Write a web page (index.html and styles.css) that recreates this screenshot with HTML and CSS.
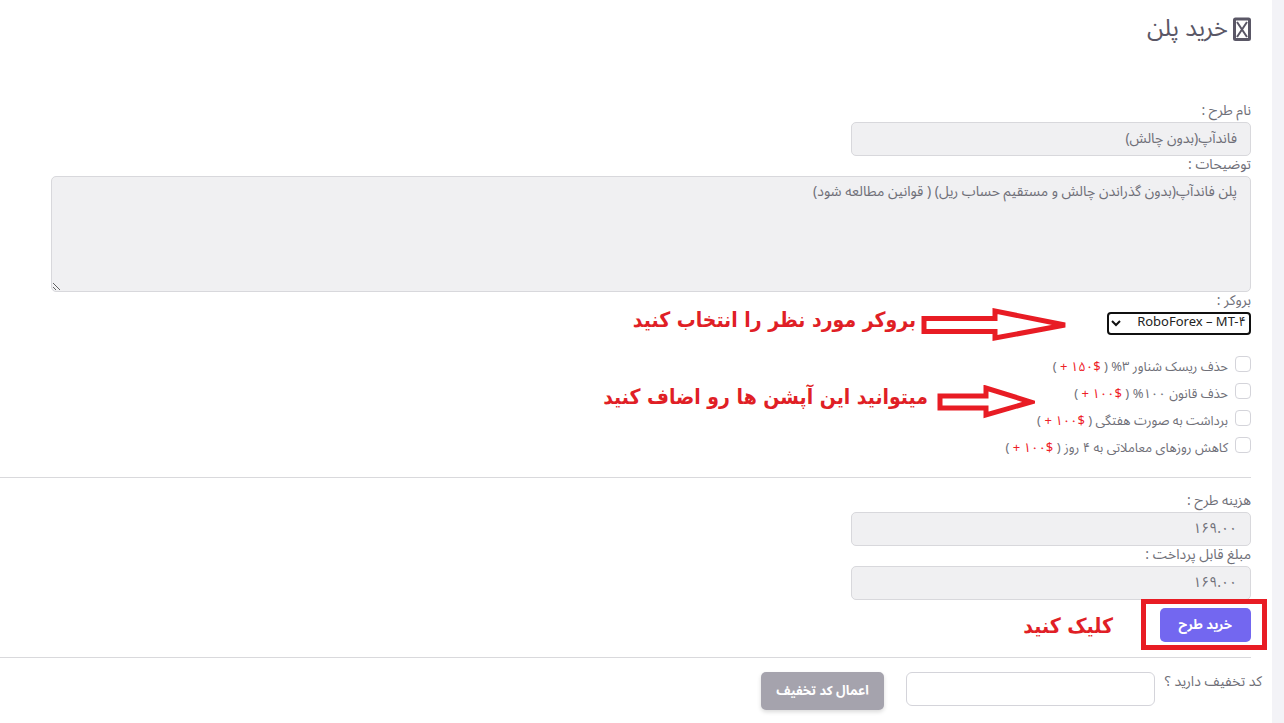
FILE: index.html
```html
<!DOCTYPE html>
<html lang="fa" dir="rtl">
<head>
    <meta charset="UTF-8">
    <meta name="viewport" content="width=device-width, initial-scale=1.0">
    <title>خرید پلن</title>
    <link rel="stylesheet" href="styles.css">
</head>
<body>

    <main class="panel">
        <h1 class="title">
            <svg class="title-icon" viewBox="0 0 18 24" aria-hidden="true">
                <rect x="1.5" y="2" width="15" height="20.500" rx="1"/>
                <path class="cross" d="M4 5 L14 20 M14 5 L4 20"/>
            </svg>
            <span>خرید پلن</span>
        </h1>

        <form class="plan-form">
            <label for="planName">نام طرح :</label>
            <input type="text" id="planName" class="input-field" value="فاندآپ(بدون چالش)" readonly>

            <label for="planInfo">توضیحات :</label>
            <textarea id="planInfo" class="input-field info-field" readonly>پلن فاندآپ(بدون گذراندن چالش و مستقیم حساب ریل) ( قوانین مطالعه شود)</textarea>

            <!-- Broker -->
            <div class="broker">
                <label for="broker">بروکر :</label>
                <div class="select-wrap">
                    <select id="broker" class="broker-select">
                        <option>RoboForex – MT-۴</option>
                    </select>
                    <svg class="chevron" viewBox="0 0 10 7" aria-hidden="true"><path d="M1 1 L5 5 L9 1"/></svg>
                </div>
                <div class="note note-broker">
                    <svg width="148" height="34" viewBox="0 0 148 34" aria-hidden="true">
                        <path d="M3 10.500H74V3L144 17L74 30V23.500H3Z"/>
                    </svg>
                    <span>بروکر مورد نظر را انتخاب کنید</span>
                </div>
            </div>

            <!-- Options -->
            <div class="options">
                <div class="option">
                    <input type="checkbox" id="opt1">
                    <label for="opt1">حذف ریسک شناور ۳% ( <span class="price" dir="ltr">+ ۱۵۰$</span> )</label>
                </div>
                <div class="option">
                    <input type="checkbox" id="opt2">
                    <label for="opt2">حذف قانون ۱۰۰% ( <span class="price" dir="ltr">+ ۱۰۰$</span> )</label>
                </div>
                <div class="option">
                    <input type="checkbox" id="opt3">
                    <label for="opt3">برداشت به صورت هفتگی ( <span class="price" dir="ltr">+ ۱۰۰$</span> )</label>
                </div>
                <div class="option">
                    <input type="checkbox" id="opt4">
                    <label for="opt4">کاهش روزهای معاملاتی به ۴ روز ( <span class="price" dir="ltr">+ ۱۰۰$</span> )</label>
                </div>
                <div class="note note-options">
                    <svg width="98" height="34" viewBox="0 0 98 34" aria-hidden="true">
                        <path d="M3 11H49V3L94 17L49 30V23H3Z"/>
                    </svg>
                    <span>میتوانید این آپشن ها رو اضاف کنید</span>
                </div>
            </div>

            <hr>

            <label for="planCost">هزینه طرح :</label>
            <input type="text" id="planCost" class="input-field" value="۱۶۹.۰۰" readonly>

            <label for="payable">مبلغ قابل پرداخت :</label>
            <input type="text" id="payable" class="input-field" value="۱۶۹.۰۰" readonly>

            <div class="buy">
                <button type="button" class="btn">خرید طرح</button>
                <div class="frame"></div>
                <div class="note note-buy">کلیک کنید</div>
            </div>
        </form>

        <hr>

        <!-- Discount code -->
        <form class="discount">
            <label for="code">کد تخفیف دارید ؟</label>
            <input type="text" id="code" class="code-field">
            <button type="button" class="btn btn-code">اعمال کد تخفیف</button>
        </form>
    </main>

</body>
</html>
```
FILE: styles.css
```css
* {
    box-sizing: border-box;
    margin: 0;
    padding: 0;
}

body {
    min-height: 100vh;
    padding-right: 12px;
    background: #f3f3f7;
    color: #6f6f78;
    font-family: "Noto Sans Arabic", "Vazirmatn", "Noto Sans", "DejaVu Sans", sans-serif;
    font-size: 14px;
    line-height: 20px;
    overflow-x: hidden;
}

.panel {
    min-height: 100vh;
    padding: 12px 21px 12px 0;
    background: #fff;
}

.title {
    display: flex;
    align-items: center;
    gap: 5px;
    height: 34px;
    margin-bottom: 56px;
    color: #5a5766;
    font-size: 24px;
    font-weight: 400;
}

.title-icon {
    width: 18px;
    height: 24px;
    fill: none;
    stroke: #5a5766;
    stroke-width: 3;
}

.title-icon .cross {
    stroke-width: 2;
}

.plan-form > label,
.broker label {
    display: block;
    height: 20px;
    line-height: 18px;
}

.input-field {
    display: block;
    width: 400px;
    max-width: 100%;
    height: 34px;
    padding: 0 13px 2px;
    border: 1px solid #d8d8dc;
    border-radius: 5px;
    background: #f0f0f2;
    color: #6f6f78;
    font: inherit;
}

.info-field {
    width: calc(100% - 51px);
    height: 116px;
    padding: 5px 13px;
    resize: both;
}

.broker {
    position: relative;
}

.select-wrap {
    position: relative;
    width: 144px;
    margin-bottom: 20px;
}

.broker-select {
    display: block;
    width: 100%;
    height: 23px;
    padding: 0 3px 3px;
    border: 2px solid #101010;
    border-radius: 4px;
    background: #fff;
    color: #222;
    font-family: inherit;
    font-size: 13px;
    line-height: 16px;
    appearance: none;
}

.chevron {
    position: absolute;
    left: 4px;
    top: 8px;
    width: 10px;
    height: 7px;
    fill: none;
    stroke: #101010;
    stroke-width: 2;
}

/* Options */
.options {
    position: relative;
    margin-bottom: 14px;
}

.option {
    display: flex;
    gap: 7px;
    height: 27px;
    font-size: 13px;
}

.option input {
    width: 16px;
    height: 16px;
    margin-top: 1px;
    border: 1px solid #d4d4da;
    border-radius: 4px;
    background: #fff;
    appearance: none;
}

.option label {
    padding-top: 2px;
}

.price {
    color: #ee2027;
}

hr {
    border: none;
    border-top: 1px solid #d9d9dc;
    margin-bottom: 14px;
}

/* Buttons */
.btn {
    height: 34px;
    padding: 0 19px;
    border: none;
    border-radius: 5px;
    background: #7367f0;
    color: #fff;
    font: inherit;
    font-size: 13px;
    font-weight: bold;
    cursor: pointer;
}

.buy {
    position: relative;
    display: flex;
    padding: 8px 0 15px;
}

.discount {
    display: flex;
    align-items: flex-start;
    margin-right: -11px;
}

.code-field {
    width: 249px;
    height: 34px;
    margin: 0 10px 0 22px;
    padding: 0 13px;
    border: 1px solid #d4d4da;
    border-radius: 6px;
    font: inherit;
}

.btn-code {
    height: 38px;
    padding: 0 15px;
    background: #a5a3ad;
    box-shadow: 0 2px 4px rgba(0, 0, 0, 0.15);
}

/* Red guide notes */
.note {
    position: absolute;
    display: flex;
    align-items: center;
    gap: 5px;
    color: #e01f26;
    font-family: "DejaVu Sans Condensed", "DejaVu Sans", sans-serif;
    font-size: 21px;
    font-weight: bold;
    line-height: 28px;
    white-space: nowrap;
}

.note span {
    padding-bottom: 10px;
}

.note svg {
    fill: none;
    stroke: #e81c24;
    stroke-width: 5;
}

.note-broker {
    right: 182px;
    top: 14px;
}

.note-options {
    right: 216px;
    top: 28px;
    gap: 9px;
}

.note-buy {
    right: 138px;
    top: 12px;
}

.frame {
    position: absolute;
    right: -16px;
    top: -1px;
    width: 126px;
    height: 51px;
    border: 5px solid #e81c24;
    pointer-events: none;
}
```
